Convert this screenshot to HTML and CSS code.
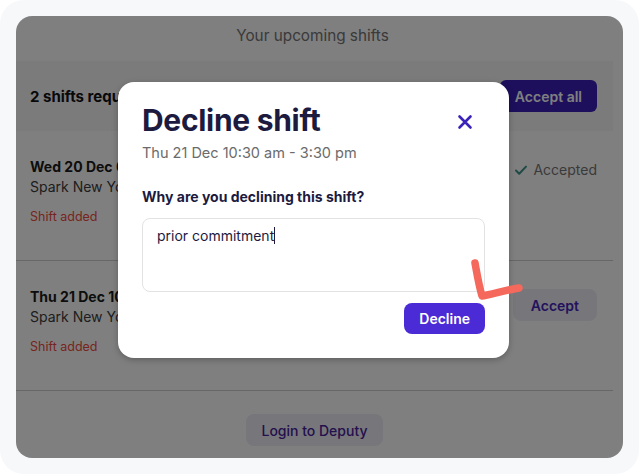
FILE: index.html
```html
<!DOCTYPE html>
<html>
<head>
  <title>Upcoming shifts</title>
  <link rel="stylesheet" href="styles.css">
</head>
<body>
  <div class="frame">
    <div class="app">
      <!-- Page behind the dialog -->
      <div class="list">
        <h2 class="page-title">Your upcoming shifts</h2>
        <div class="banner">
          <span class="banner-text">2 shifts require your response</span>
          <button type="button" class="btn-primary">Accept all</button>
        </div>

        <div class="shift">
          <div class="shift-info">
            <div class="shift-date">Wed 20 Dec 6:00 am - 2:00 pm</div>
            <div class="shift-place">Spark New York</div>
            <div class="shift-note">Shift added</div>
          </div>
          <div class="shift-status">
            <svg width="14" height="14" viewBox="0 0 14 14"><path d="M2 7.5l3.2 3.2L12 3.6" fill="none" stroke="#3f9488" stroke-width="2" stroke-linecap="round" stroke-linejoin="round"/></svg>
            Accepted
          </div>
        </div>

        <div class="shift">
          <div class="shift-info">
            <div class="shift-date">Thu 21 Dec 10:30 am - 3:30 pm</div>
            <div class="shift-place">Spark New York</div>
            <div class="shift-note">Shift added</div>
          </div>
          <button type="button" class="btn-soft">Accept</button>
        </div>

        <div class="footer">
          <button type="button" class="btn-soft btn-login">Login to Deputy</button>
        </div>
      </div>

      <div class="overlay"></div>

      <!-- Decline dialog -->
      <div class="modal">
        <div class="modal-head">
          <h1 class="modal-title">Decline shift</h1>
          <svg class="close" width="16" height="16" viewBox="0 0 16 16"><path d="M2.5 2.5l11 11M13.5 2.5l-11 11" stroke="#3b22b8" stroke-width="2.6" stroke-linecap="round"/></svg>
        </div>
        <div class="modal-sub">Thu 21 Dec 10:30 am - 3:30 pm</div>
        <label class="modal-label" for="reason">Why are you declining this shift?</label>
        <div class="reason" id="reason">prior commitment<span class="caret"></span></div>
        <div class="modal-actions">
          <button type="button" class="btn-decline">Decline</button>
        </div>
      </div>

      <!-- hand drawn tick -->
      <svg class="tick" width="62" height="50" viewBox="0 0 62 50"><path d="M7 5 C9 16 11 28 14 38 C25 36 38 32 51 30" fill="none" stroke="#f4695c" stroke-width="7.5" stroke-linecap="round" stroke-linejoin="round"/></svg>
    </div>
  </div>
</body>
</html>
```

FILE: styles.css
```css
/* Shifts page with decline dialog */
body {
  margin: 0;
  background: #ffffff;
  font-family: Inter, "Noto Sans", sans-serif;
}
.frame {
  height: 474px;
  padding: 16px;
  box-sizing: border-box;
  background: #f7f8fa;
  border-radius: 24px;
}
.app {
  position: relative;
  height: 442px;
  background: #ffffff;
  border-radius: 16px;
  overflow: hidden;
}
.page-title {
  margin: 0;
  padding: 10px 4px 0 0;
  height: 35px;
  text-align: center;
  font-size: 15.3px;
  font-weight: 400;
  color: #747474;
}
.list {
  margin-right: 10px;
}
.banner {
  display: flex;
  align-items: center;
  justify-content: space-between;
  height: 70px;
  padding: 0 16px 0 14px;
  background: #f6f6f6;
}
.banner-text {
  font-size: 15px;
  font-weight: 700;
  color: #111111;
}
.btn-primary {
  height: 32px;
  padding: 0 15px;
  border: none;
  border-radius: 6px;
  background: #3a1eb8;
  color: #ffffff;
  font-family: inherit;
  font-size: 14px;
  font-weight: 600;
}
.shift {
  display: flex;
  justify-content: space-between;
  align-items: flex-start;
  height: 129px;
  padding: 0 16px 0 14px;
  border-bottom: 1px solid #cfcfcf;
}
.shift-info {
  padding-top: 26px;
}
.shift-date {
  font-size: 14px;
  font-weight: 700;
  color: #1a1a1a;
  line-height: 20px;
}
.shift-place {
  font-size: 14px;
  color: #3c3c3c;
  line-height: 19px;
}
.shift-note {
  margin-top: 11px;
  font-size: 12.5px;
  color: #f04a40;
  line-height: 19px;
}
.shift-status {
  display: flex;
  align-items: center;
  gap: 5px;
  margin-top: 30px;
  font-size: 14px;
  color: #757575;
}
.btn-soft {
  margin-top: 28px;
  height: 32px;
  padding: 0 18px;
  border: none;
  border-radius: 8px;
  background: #eeedf6;
  color: #4627bc;
  font-family: inherit;
  font-size: 14px;
  font-weight: 600;
}
.footer {
  display: flex;
  justify-content: center;
}
.btn-login {
  margin-top: 23px;
  padding: 0 15px;
  font-weight: 500;
  color: #46229a;
}
.overlay {
  position: absolute;
  inset: 0;
  background: rgba(0, 0, 0, 0.5);
}
.modal {
  position: absolute;
  left: 102px;
  top: 66px;
  width: 391px;
  height: 276px;
  box-sizing: border-box;
  padding: 18px 24px 24px;
  background: #ffffff;
  border-radius: 16px;
  box-shadow: 0 2px 6px rgba(0, 0, 0, 0.25);
  color: #1c1a3f;
}
.modal-head {
  display: flex;
  justify-content: space-between;
  align-items: center;
}
.modal-title {
  margin: 0;
  font-size: 30px;
  font-weight: 700;
  line-height: 40px;
  letter-spacing: -0.3px;
}
.close {
  margin-right: 12px;
  margin-top: 4px;
}
.modal-sub {
  margin-top: 4px;
  font-size: 14.5px;
  color: #6b6b6b;
}
.modal-label {
  display: block;
  margin-top: 27px;
  font-size: 14px;
  font-weight: 700;
}
.reason {
  margin-top: 13px;
  height: 74px;
  box-sizing: border-box;
  padding: 8px 14px;
  border: 1px solid #e2e2e2;
  border-radius: 8px;
  font-size: 14px;
  line-height: 18px;
}
.caret {
  display: inline-block;
  width: 1px;
  height: 17px;
  background: #1c1a3f;
  vertical-align: -3px;
}
.modal-actions {
  display: flex;
  justify-content: flex-end;
  margin-top: 11px;
}
.btn-decline {
  height: 31px;
  padding: 0 15px;
  border: none;
  border-radius: 8px;
  background: #4a2bd6;
  color: #ffffff;
  font-family: inherit;
  font-size: 14px;
  font-weight: 600;
}
.tick {
  position: absolute;
  left: 452px;
  top: 242px;
}
```
